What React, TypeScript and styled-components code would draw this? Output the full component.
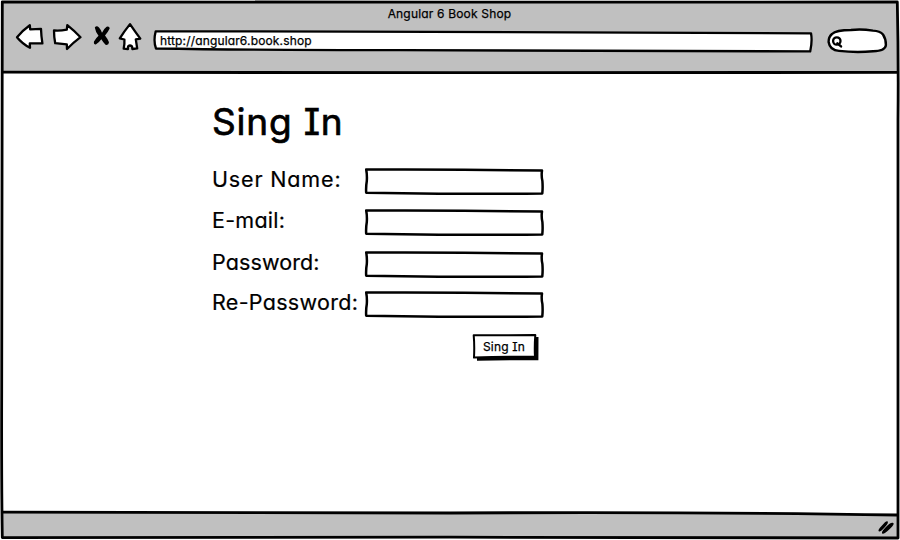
import React from "react";
import styled, { createGlobalStyle } from "styled-components";

const GlobalStyle = createGlobalStyle`
  *, *::before, *::after { box-sizing: border-box; }
  body { margin: 0; background: #fff; }
`;

const Window = styled.div`
  position: relative;
  display: flex;
  flex-direction: column;
  width: 900px;
  height: 540px;
  padding: 2px 2px 2px 3px;
  overflow: hidden;
  color: #000;
  background: #fff;
  font-family: Inter, "Noto Sans", sans-serif;
  font-feature-settings: "cv11" 1, "cv08" 1, "calt" 0;
`;

const Overlay = styled.svg`
  position: absolute;
  inset: 0;
  width: 100%;
  height: 100%;
  overflow: visible;
  pointer-events: none;
  fill: none;
  stroke: #000;
  stroke-linejoin: round;
  stroke-linecap: round;
`;

const Header = styled.header`
  flex: 0 0 70px;
  background: #c0c0c0;
`;

const Title = styled.div`
  height: 23px;
  padding-right: 2px;
  text-align: center;
  font-size: 12px;
  line-height: 23px;
  letter-spacing: 0.18px;
  -webkit-text-stroke: 0.25px #000;
`;

const Toolbar = styled.div`
  display: flex;
  align-items: flex-start;
  height: 34px;
  padding-left: 10px;
`;

const NavIcons = styled.svg`
  flex: 0 0 132px;
  height: 34px;
  margin-right: 8px;
  overflow: visible;
  fill: #fff;
  stroke: #000;
  stroke-width: 2.3;
  stroke-linejoin: round;
  stroke-linecap: round;
`;

const AddressBar = styled.div`
  position: relative;
  flex: 0 0 660px;
  height: 24px;
  margin: 4px 14px 0 0;
`;

const Address = styled.span`
  position: relative;
  display: block;
  padding-left: 7px;
  font-size: 12px;
  line-height: 24px;
  letter-spacing: 0.15px;
  -webkit-text-stroke: 0.25px #000;
`;

const Search = styled.svg`
  flex: 0 0 62px;
  height: 28px;
  margin-top: 2px;
  fill: #fff;
  stroke: #000;
  stroke-width: 2.4;
  stroke-linejoin: round;
  stroke-linecap: round;
`;

const Content = styled.main`
  flex: 1;
  padding: 25px 0 0 209px;
`;

const Heading = styled.h1`
  margin: 0;
  height: 63px;
  font-size: 37px;
  font-weight: 400;
  line-height: 50px;
  letter-spacing: 0.8px;
  -webkit-text-stroke: 0.7px #000;
`;

const Form = styled.form`
  display: grid;
  grid-template-columns: 152px 180px;
  grid-template-rows: 41px 42px 40px 42px 28px;
`;

const Label = styled.label<{ $track: number }>`
  padding-top: 6px;
  white-space: nowrap;
  font-size: 21.5px;
  line-height: 26px;
  letter-spacing: ${(p) => p.$track}px;
  -webkit-text-stroke: 0.2px #000;
`;

const Field = styled.div`
  position: relative;
  width: 180px;
  height: 27px;
  margin-top: 8px;
`;

const TextInput = styled.input`
  position: relative;
  display: block;
  width: 100%;
  height: 100%;
  padding: 3px 8px;
  border: 0;
  outline: 0;
  background: transparent;
  font: inherit;
`;

const Submit = styled.button`
  position: relative;
  grid-column: 2;
  justify-self: end;
  width: 67px;
  height: 28px;
  margin: 8px 5px 0 0;
  padding: 0 3px 2px 0;
  border: 0;
  background: transparent;
  color: #000;
  font-family: inherit;
  font-feature-settings: inherit;
  font-size: 12px;
  letter-spacing: 0.2px;
  -webkit-text-stroke: 0.25px #000;
`;

const ButtonText = styled.span`
  position: relative;
`;

const Footer = styled.footer`
  display: flex;
  justify-content: flex-end;
  flex: 0 0 26px;
  background: #c0c0c0;
  clip-path: polygon(0 0, 60% 0, 100% 3px, 100% 100%, 0 100%);
`;

const Grip = styled.svg`
  width: 20px;
  height: 18px;
  margin: 6px 2px 0 0;
  fill: #000;
`;

const fields = [
  { id: "user", label: "User Name:", type: "text", track: 0.85 },
  { id: "email", label: "E-mail:", type: "email", track: 0.25 },
  { id: "password", label: "Password:", type: "password", track: 0.1 },
  { id: "repeat", label: "Re-Password:", type: "password", track: 0.3 },
];

export default function App() {
  return (
    <>
      <GlobalStyle />
      <Window>
        <Header>
          <Title>Angular 6 Book Shop</Title>
          <Toolbar>
            <NavIcons viewBox="13 25 132 34" preserveAspectRatio="xMinYMin meet">
              <path d="M17 37.2Q23 30 29.8 25.2L30.2 29.3 41 28.8Q41.2 36 42.4 43.4L29.8 43.4 30 47.8Q22 43.5 17 37.2Z" />
              <path d="M54 30.4Q60 30.9 66.8 29.6L67.3 25.2Q74.5 31 80.5 37.2 73.5 42.5 67 49L66.8 44.3 55.2 43.2Q54 37 54 30.4Z" />
              <path stroke="none" fill="#000" d="M94.8 27.6Q96.6 24.9 99 27.6 101 30 102 32.7 104 28.5 106.6 26.7 109.6 25.9 109.7 28.6 107.5 33 105 35.6 107.5 38.7 109 42.3 108.7 45.6 105.5 44.8 103 42 101.3 39.2 99 42.5 95.8 44.5 93.4 44.6 94 41.5 96 38 98.5 35.8 95.5 32 94.8 27.6Z" />
              <path d="M130 24.1Q135 31.5 140.3 38.6L135.8 39.4 137.2 48.4 132.4 49 132 46.4Q130 44.7 128.1 46.3L127.9 49.2 123.7 48.6Q124.7 44 124.4 39.5L119.8 38.3Q124.5 31 130 24.1Z" />
            </NavIcons>
            <AddressBar>
              <Overlay viewBox="153 29 660 24" strokeWidth="2.3">
                <path fill="#fff" d="M155.7 31.3Q260 31.8 350 31.6Q590 31.6 811 33.3Q812.5 41 810.2 51.4Q590 51.4 400 50.2Q250 50.2 156 48.5Q153.2 41 155.7 31.3Z" />
              </Overlay>
              <Address>http://angular6.book.shop</Address>
            </AddressBar>
            <Search viewBox="827 27 62 28">
              <path d="M832 34Q836 30 851 30Q861 28.7 873 30.6Q880 31 883 34.5Q886 39 885.9 45Q885.5 51 873 51.3Q856 52.9 839 50.9Q830 50.5 828.6 42Q828.5 37 832 34Z" />
              <circle cx="836.8" cy="41" r="3.7" strokeWidth="2.3" />
              <path d="M837.4 43.4 841 46.4" strokeWidth="2.5" />
            </Search>
          </Toolbar>
        </Header>
        <Content>
          <Heading>Sing In</Heading>
          <Form onSubmit={(e) => e.preventDefault()}>
            {fields.map((f) => (
              <React.Fragment key={f.id}>
                <Label htmlFor={f.id} $track={f.track}>{f.label}</Label>
                <Field>
                  <Overlay viewBox="0 0 180 27" strokeWidth="2.5">
                    <path d="M2.2 1.6Q50 1.4 100 1.7L178 2.5Q177.2 8 178.4 13Q178.9 20 178.3 25.4Q130 26 75 25.8L2.2 24.7Q1.8 19 2.8 13Q3.2 7 2.2 1.6Z" />
                  </Overlay>
                  <TextInput id={f.id} type={f.type} />
                </Field>
              </React.Fragment>
            ))}
            <Submit type="submit">
              <Overlay viewBox="0 0 67 28" strokeWidth="2">
                <path fill="#000" stroke="none" d="M4.5 5.5 66.5 4 66.4 27.2Q35 27 5 27.7Z" />
                <path fill="#fff" d="M1.7 2.3 63.3 2.1Q62.4 14 63 23.6Q32 23.6 2 24.6Q2.6 12 1.7 2.3Z" />
              </Overlay>
              <ButtonText>Sing In</ButtonText>
            </Submit>
          </Form>
        </Content>
        <Footer>
          <Grip viewBox="876 518 20 18">
            <path d="M879 531.5Q877 530.5 882 525.5Q886 520.5 887.5 521.3Q889 523 885 527Q880.5 532 879 531.5Z" />
            <path d="M882.5 533.8Q880.5 532.5 885 528Q890 522.3 893 522.8Q895.3 523.7 890 528.8Q884.5 534.2 882.5 533.8Z" />
          </Grip>
        </Footer>
        <Overlay viewBox="0 0 900 540" strokeWidth="2.8">
          <path d="M2.3 1.8Q220 2.4 450 2.2L897.3 2Q898.6 60 898 120Q897.3 330 898 538Q680 538.3 450 537.2Q250 536.8 2.3 537.6Q1.4 480 1.7 390Q2.2 200 2.3 1.8Z" />
          <path d="M3 72.2Q200 73.3 450 72.7Q660 73 897 72.4M3 512.2Q240 513.3 450 513Q700 511.7 897 515" />
        </Overlay>
      </Window>
    </>
  );
}
